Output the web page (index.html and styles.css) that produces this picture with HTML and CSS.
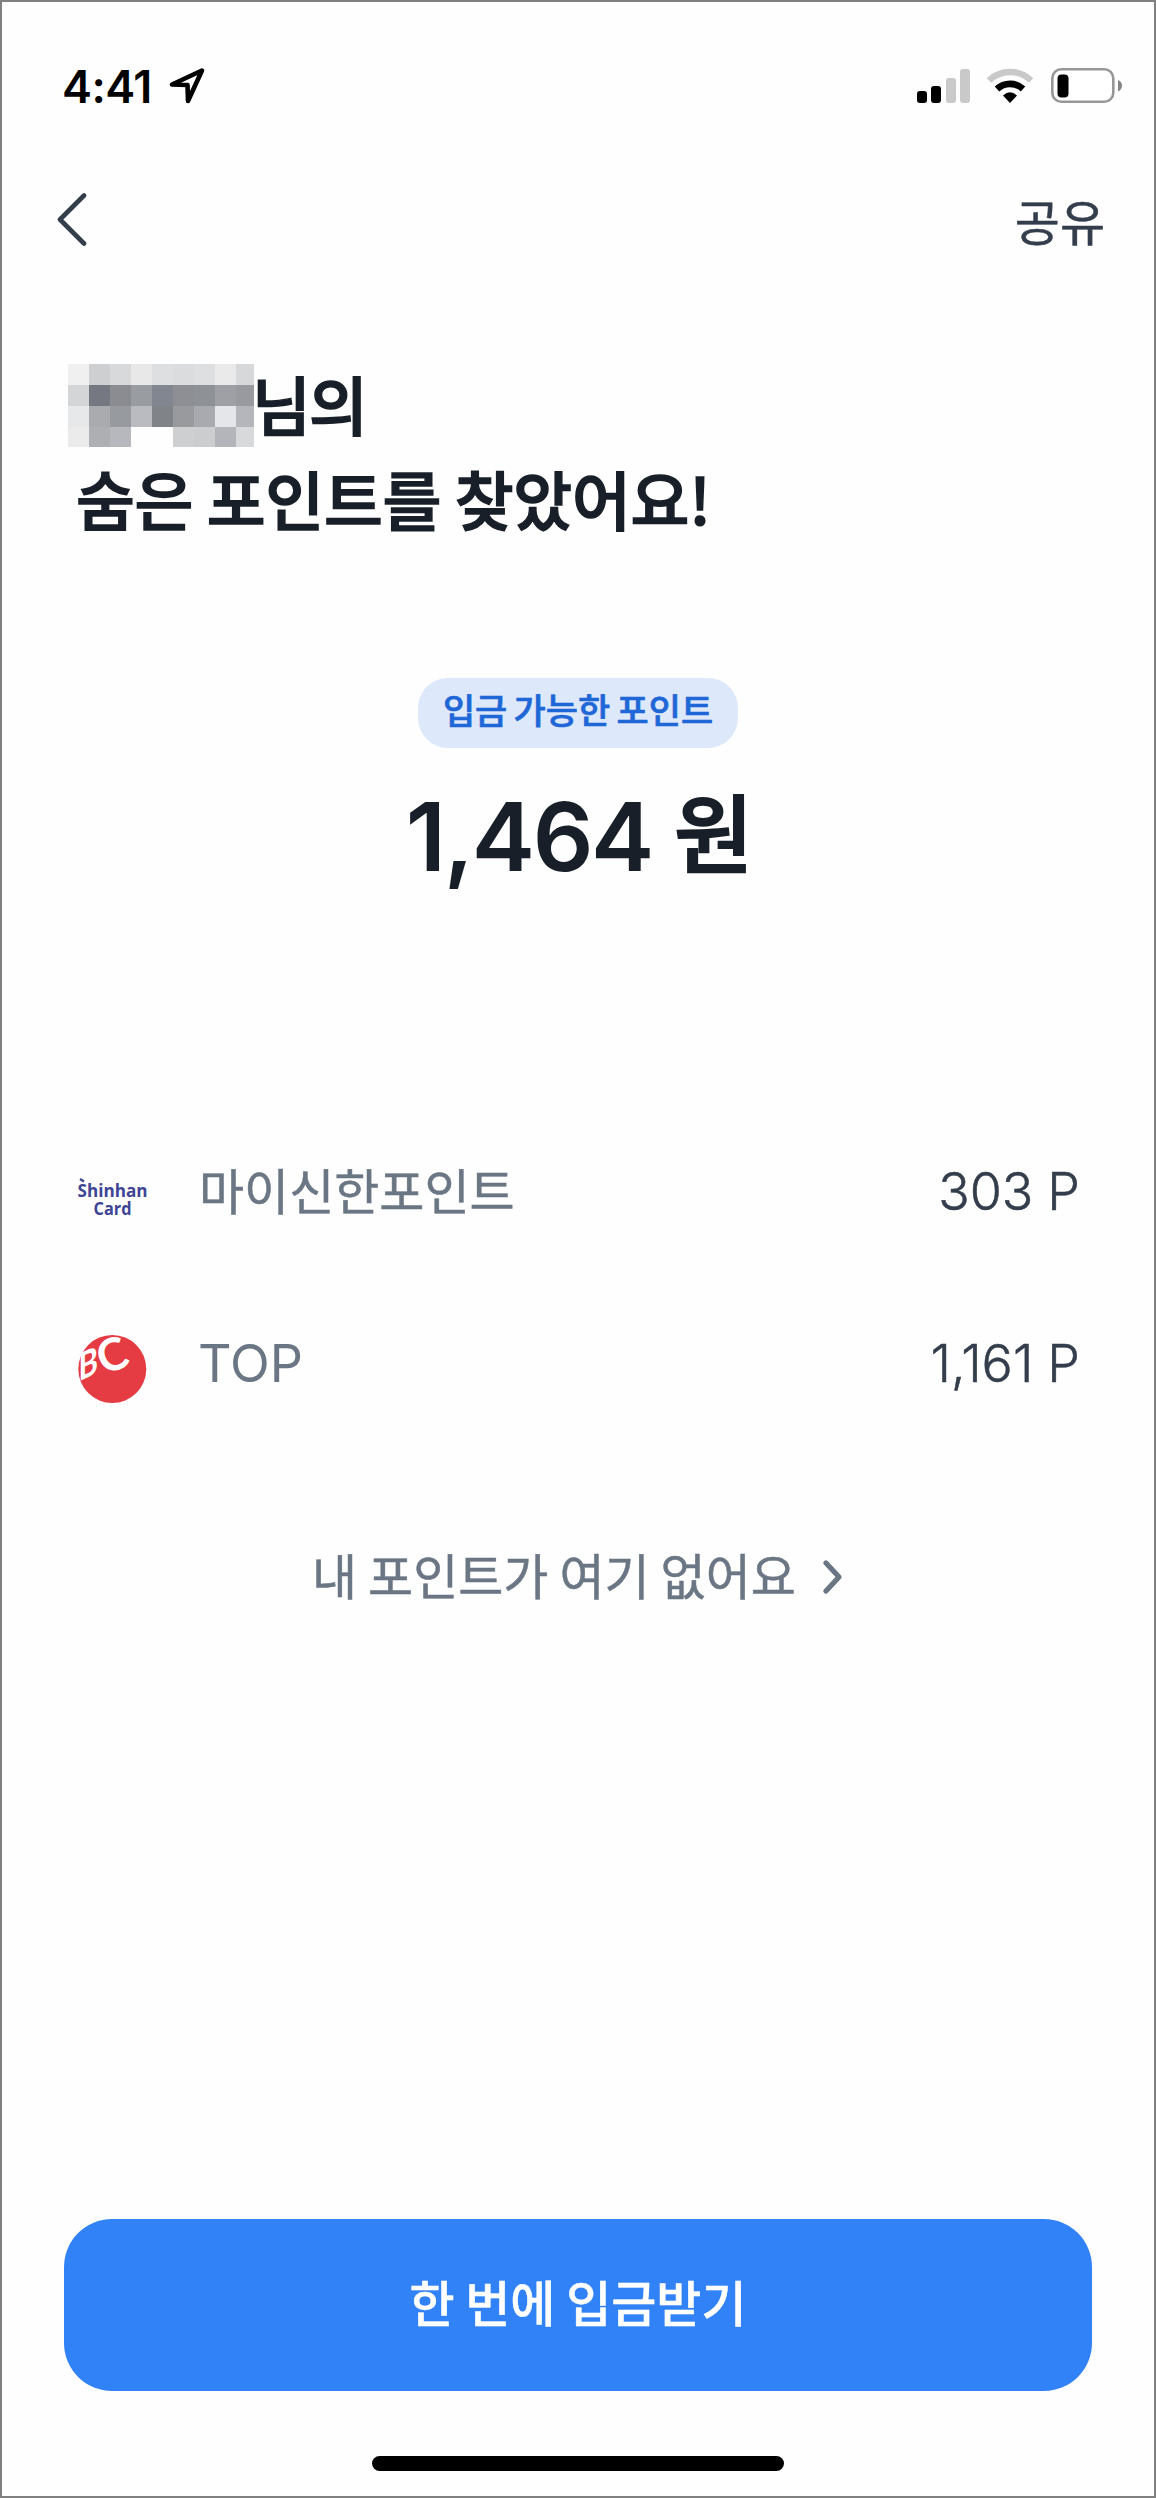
FILE: index.html
```html
<!DOCTYPE html>
<html lang="ko">
<head>
<meta charset="utf-8">
<title>숨은 포인트</title>
<link rel="stylesheet" href="styles.css">
</head>
<body>
<main class="screen">
  <div class="status">
    <div class="status-left">
      <span class="time">4:41</span>
      <svg class="location" width="38" height="38" viewBox="0 0 38 38"><path d="M34 3.500 L4 17.500 L19.500 18 L20 34 Z" fill="none" stroke="#000" stroke-width="4.600" stroke-linejoin="round"/></svg>
    </div>
    <div class="status-right">
      <svg width="54" height="34" viewBox="0 0 54 34"><rect x="0" y="22" width="10" height="12" rx="3"/><rect x="14" y="17" width="10" height="17" rx="3"/><rect x="29" y="9" width="10" height="25" rx="3" fill="#c9c9c9"/><rect x="43" y="0" width="10" height="34" rx="3" fill="#c9c9c9"/></svg>
      <svg class="wifi" width="48" height="36" viewBox="0 0 48 36"><path d="M3 12.500 A30 30 0 0 1 45 12.500" fill="none" stroke="#c9c9c9" stroke-width="6.500"/><path d="M11 21 A19 19 0 0 1 37 21" fill="none" stroke="#000" stroke-width="6.600"/><path d="M17 27.500 Q24 21 31 27.500 L24 35 Z"/></svg>
      <svg class="battery" width="72" height="36" viewBox="0 0 72 36"><rect x="1.300" y="1.300" width="61" height="32.500" rx="9" fill="#fff" stroke="#979797" stroke-width="2.600"/><rect x="6.500" y="6.500" width="11" height="23" rx="4"/><path d="M67 12 Q71 13.500 71 17.500 T67 23.500 Z" fill="#858585"/></svg>
    </div>
  </div>

  <nav class="nav">
    <svg class="back" width="32" height="56" viewBox="0 0 32 56"><path d="M27 3.500 L3 27.500 L27 51.500" fill="none" stroke="#333d4b" stroke-width="4.600" stroke-linecap="round" stroke-linejoin="round"/></svg>
    <span class="share">공유</span>
  </nav>

  <h1 class="title">
    <span class="title-name">
      <svg class="mosaic" width="186" height="83" viewBox="0 0 186 83" shape-rendering="crispEdges">
        <rect width="21" height="21" fill="#f0f0f0"/><rect x="21" width="21" height="21" fill="#cecfd1"/><rect x="42" width="21" height="21" fill="#d8d9db"/><rect x="63" width="21" height="21" fill="#e8e8e8"/><rect x="84" width="21" height="21" fill="#dedfe0"/><rect x="105" width="21" height="21" fill="#dbdcde"/><rect x="126" width="21" height="21" fill="#dedfe0"/><rect x="147" width="21" height="21" fill="#eaeaea"/><rect x="168" width="18" height="21" fill="#d7d8da"/>
        <rect y="21" width="21" height="21" fill="#d4d5d7"/><rect x="21" y="21" width="21" height="21" fill="#757880"/><rect x="42" y="21" width="21" height="21" fill="#8b8c92"/><rect x="63" y="21" width="21" height="21" fill="#999ca1"/><rect x="84" y="21" width="21" height="21" fill="#828690"/><rect x="105" y="21" width="21" height="21" fill="#8d8f94"/><rect x="126" y="21" width="21" height="21" fill="#8e9196"/><rect x="147" y="21" width="21" height="21" fill="#9fa0a5"/><rect x="168" y="21" width="18" height="21" fill="#999a9f"/>
        <rect y="42" width="21" height="21" fill="#e7e8ea"/><rect x="21" y="42" width="21" height="21" fill="#a9abaf"/><rect x="42" y="42" width="21" height="21" fill="#979a9f"/><rect x="63" y="42" width="21" height="21" fill="#babbc0"/><rect x="84" y="42" width="21" height="21" fill="#808488"/><rect x="105" y="42" width="21" height="21" fill="#989a9e"/><rect x="126" y="42" width="21" height="21" fill="#a9aaaf"/><rect x="147" y="42" width="21" height="21" fill="#e5e6e9"/><rect x="168" y="42" width="18" height="21" fill="#b5b6bb"/>
        <rect y="63" width="21" height="20" fill="#ebebeb"/><rect x="21" y="63" width="21" height="20" fill="#adafb3"/><rect x="42" y="63" width="21" height="20" fill="#b7b8bd"/><rect x="105" y="63" width="21" height="20" fill="#cecfd1"/><rect x="126" y="63" width="21" height="20" fill="#cccdcf"/><rect x="147" y="63" width="21" height="20" fill="#b3b5ba"/><rect x="168" y="63" width="18" height="20" fill="#d8d9db"/>
      </svg>
      <span class="title-suffix">님의</span>
    </span>
    <span class="title-found">숨은 포인트를 찾았어요!</span>
  </h1>

  <section class="summary">
    <span class="badge">입금 가능한 포인트</span>
    <p class="amount"><span class="amount-number">1,464</span><span class="amount-unit">원</span></p>
  </section>

  <ul class="points">
    <li class="point">
      <svg class="logo" width="76" height="76" viewBox="0 0 76 76"><g class="shinhan"><text x="38.500" y="42" textLength="70" lengthAdjust="spacingAndGlyphs">Shinhan</text><text x="38.500" y="60" textLength="38" lengthAdjust="spacingAndGlyphs">Card</text></g><path d="M6 24 L10 26.500" stroke="#3d4494" stroke-width="2.400"/></svg>
      <span class="point-name">마이신한포인트</span>
      <span class="point-value">303<i class="unit">P</i></span>
    </li>
    <li class="point">
      <svg class="logo" width="76" height="76" viewBox="0 0 76 76"><circle cx="38.300" cy="42" r="34" fill="#e53b43"/><g class="bc"><text transform="matrix(.78 -.36 0 1 4.500 54.500)" font-size="38">B</text><text transform="translate(29.500 48) rotate(-20)" font-size="45">C</text></g></svg>
      <span class="point-name top">TOP</span>
      <span class="point-value">1,161<i class="unit">P</i></span>
    </li>
  </ul>

  <div class="more">
    <span class="more-label">내 포인트가 여기 없어요</span>
    <svg width="22" height="38" viewBox="0 0 22 38"><path d="M4 5 L17 19 L4 33" fill="none" stroke="#6b7684" stroke-width="5.200" stroke-linecap="round" stroke-linejoin="round"/></svg>
  </div>

  <button class="cta">한 번에 입금받기</button>
  <div class="home-bar"></div>
</main>
</body>
</html>
```
FILE: styles.css
```css
* { box-sizing: border-box; }
body { margin: 0; background: #fff; }
.screen {
  width: 1156px;
  height: 2498px;
  border: 2px solid #808080;
  background: #fefefe;
  display: flex;
  flex-direction: column;
  font-family: Inter, "Noto Sans CJK KR", sans-serif;
  color: #191f28;
  white-space: nowrap;
}
svg { display: block; flex: none; }
.status { height: 168px; display: flex; justify-content: space-between; align-items: center; padding: 0 31px 0 60px; color: #000; }
.status-left, .status-right { display: flex; align-items: center; }
.time { font-size: 45px; font-weight: 600; letter-spacing: -.5px; }
.location { margin-left: 16px; }
.wifi { margin-left: 15px; }
.battery { margin-left: 17px; }

.nav { height: 100px; display: flex; justify-content: space-between; align-items: center; padding: 0 49px 0 55px; }
.share { font-family: "Noto Sans CJK KR", sans-serif; font-size: 49px; line-height: 60px; color: #333d4b; -webkit-text-stroke: .5px; }

.title { margin: 85px 0 0 66px; font: 500 64px/95px "Noto Sans CJK KR", sans-serif; -webkit-text-stroke: 1.5px; }
.title-name { display: flex; align-items: center; height: 95px; }
.mosaic { margin-top: 6px; }
.title-suffix { margin-left: -2px; letter-spacing: -2px; }
.title-found { display: block; margin-left: 8px; word-spacing: -4px; letter-spacing: -.3px; }

.summary { margin-top: 133px; display: flex; flex-direction: column; align-items: center; }
.badge { width: 320px; height: 70px; border-radius: 30px; background: #dde9fb; color: #1f66d6; font: 500 35px/61px "Noto Sans CJK KR", sans-serif; text-align: center; word-spacing: -3.500px; -webkit-text-stroke: .7px; }
.amount { margin: 27px 0 0 3px; height: 120px; display: flex; align-items: center; gap: 22px; line-height: 120px; }
.amount-number { padding-top: 4px; font-size: 95px; font-weight: 600; letter-spacing: -2.300px; }
.amount-unit { padding-bottom: 10px; font: 500 86px/110px "Noto Sans CJK KR", sans-serif; -webkit-text-stroke: 2px; }

.points { margin: 212px 0 0; padding: 0 74px 0 72px; list-style: none; }
.point { height: 172px; display: flex; align-items: center; }
.point-name { margin-left: 49px; padding-bottom: 9px; font-family: "Noto Sans CJK KR", sans-serif; font-size: 49px; color: #6b7684; -webkit-text-stroke: .5px; }
.point-name.top { margin-left: 48px; padding-bottom: 3px; font-family: Inter, sans-serif; font-size: 52px; -webkit-text-stroke: 0; }
.point-value { margin-left: auto; padding-bottom: 3px; font-size: 52px; font-weight: 300; color: #333d4b; -webkit-text-stroke: .5px; }
.unit { margin-left: 14px; font-style: normal; }
.shinhan { font: 700 17px "Open Sans", sans-serif; fill: #3d4494; text-anchor: middle; }
.bc { font-family: Lato, sans-serif; font-weight: 700; fill: #fff; }

.more { height: 100px; margin-top: 76px; display: flex; align-items: center; padding-left: 310px; gap: 26px; font: 400 49px/60px "Noto Sans CJK KR", sans-serif; color: #6b7684; }
.more-label { padding-bottom: 6px; word-spacing: -2.700px; -webkit-text-stroke: .5px; }

.cta { margin: 592px 62px 0; height: 172px; padding: 0 0 8px; border: 0; border-radius: 48px; background: #3182f6; color: #fff; font: 500 49px/60px "Noto Sans CJK KR", sans-serif; word-spacing: -3px; -webkit-text-stroke: .5px; }
.home-bar { width: 412px; height: 15px; margin: 65px auto 0; border-radius: 8px; background: #000; }
```
